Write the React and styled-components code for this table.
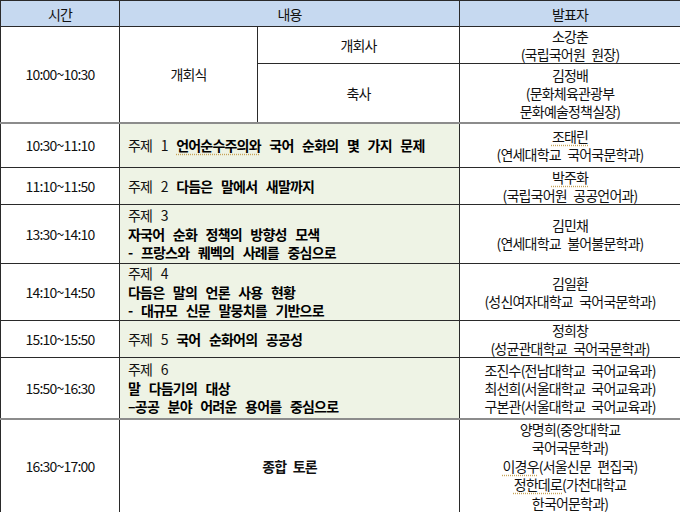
import React from 'react'
import styled, { createGlobalStyle } from 'styled-components'

const GlobalStyle = createGlobalStyle`
  html, body {
    margin: 0;
    padding: 0;
    background: #fff;
  }
  body {
    font-family: "Noto Sans CJK KR", "Noto Sans", sans-serif;
    color: #111;
  }
`

const Table = styled.table`
  width: 680px;
  height: 512px;
  border-collapse: collapse;
  table-layout: fixed;
  font-size: 14px;
  letter-spacing: -0.8px;
  border: 1px solid #2a2a2a;
`

const Row = styled.tr`
  height: ${p => p.$h}px;
  border-bottom: ${p => (p.$soft ? '2px solid #8c8c8c' : '1px solid #2a2a2a')};
`

const HeadCell = styled.th`
  background: #c6d9f0;
  font-weight: 400;
  text-align: center;
  padding: 0;
  line-height: 18px;
  border: 1px solid #2a2a2a;
`

const Cell = styled.td`
  padding: 0 ${p => (p.$left ? '8px' : '2px')};
  text-align: ${p => (p.$left ? 'left' : 'center')};
  vertical-align: middle;
  background: ${p => (p.$green ? '#eef3e5' : '#fff')};
  line-height: ${p => (p.$lh ? p.$lh : 18.5)}px;
  word-spacing: ${p => (p.$left ? 6.2 : 4)}px;
  font-weight: ${p => (p.$bold ? 700 : 400)};
  border-left: 1px solid #2a2a2a;
  border-right: 1px solid #2a2a2a;
  white-space: nowrap;
  overflow: hidden;
`

const Bold = styled.b`
  font-weight: 700;
  color: #000;
`

const Line = styled.div``

const Checked = styled.span`
  text-decoration: underline dotted #c6a45a;
  text-underline-offset: 3px;
`

const topics = [
  {
    time: '10:30~11:10',
    h: 45,
    topic: [<Line key='a'>주제 1 <Bold><Checked>언어순수주의와</Checked> 국어 순화의 몇 가지 문제</Bold></Line>],
    who: [<Line key='a'><Checked>조태린</Checked></Line>, <Line key='b'>(연세대학교 국어국문학과)</Line>]
  },
  {
    time: '11:10~11:50',
    h: 37,
    topic: [<Line key='a'>주제 2 <Bold>다듬은 말에서 새말까지</Bold></Line>],
    who: [<Line key='a'><Checked>박주화</Checked></Line>, <Line key='b'>(국립국어원 공공언어과)</Line>]
  },
  {
    time: '13:30~14:10',
    h: 59,
    topic: [
      <Line key='a'>주제 3</Line>,
      <Line key='b'><Bold>자국어 순화 정책의 방향성 모색</Bold></Line>,
      <Line key='c'><Bold>- 프랑스와 퀘벡의 사례를 중심으로</Bold></Line>
    ],
    who: [<Line key='a'>김민채</Line>, <Line key='b'>(연세대학교 불어불문학과)</Line>]
  },
  {
    time: '14:10~14:50',
    h: 57,
    topic: [
      <Line key='a'>주제 4</Line>,
      <Line key='b'><Bold>다듬은 말의 언론 사용 현황</Bold></Line>,
      <Line key='c'><Bold>- 대규모 신문 말뭉치를 기반으로</Bold></Line>
    ],
    who: [<Line key='a'>김일환</Line>, <Line key='b'>(성신여자대학교 국어국문학과)</Line>]
  },
  {
    time: '15:10~15:50',
    h: 36,
    topic: [<Line key='a'>주제 5 <Bold>국어 순화어의 공공성</Bold></Line>],
    who: [<Line key='a'>정희창</Line>, <Line key='b'>(성균관대학교 국어국문학과)</Line>]
  },
  {
    time: '15:50~16:30',
    h: 61,
    soft: true,
    topic: [
      <Line key='a'>주제 6</Line>,
      <Line key='b'><Bold>말 다듬기의 대상</Bold></Line>,
      <Line key='c'><Bold>–공공 분야 어려운 용어를 중심으로</Bold></Line>
    ],
    who: [
      <Line key='a'>조진수(전남대학교 국어교육과)</Line>,
      <Line key='b'>최선희(서울대학교 국어교육과)</Line>,
      <Line key='c'>구본관(서울대학교 국어교육과)</Line>
    ]
  }
]

const App = () => (
  <>
    <GlobalStyle />
    <Table>
      <colgroup>
        <col style={{ width: 119 }} />
        <col style={{ width: 138 }} />
        <col style={{ width: 202 }} />
        <col style={{ width: 221 }} />
      </colgroup>
      <thead>
        <Row $h={26}>
          <HeadCell>시간</HeadCell>
          <HeadCell colSpan={2}>내용</HeadCell>
          <HeadCell>발표자</HeadCell>
        </Row>
      </thead>
      <tbody>
        <Row $h={37}>
          <Cell rowSpan={2}>10:00~10:30</Cell>
          <Cell rowSpan={2}>개회식</Cell>
          <Cell>개회사</Cell>
          <Cell $lh={18}>
            <Line>소강춘</Line>
            <Line>(국립국어원 원장)</Line>
          </Cell>
        </Row>
        <Row $h={59} $soft>
          <Cell>축사</Cell>
          <Cell $lh={18}>
            <Line>김정배</Line>
            <Line>(문화체육관광부</Line>
            <Line>문화예술정책실장)</Line>
          </Cell>
        </Row>
        {topics.map(t => (
          <Row key={t.time} $h={t.h} $soft={t.soft}>
            <Cell>{t.time}</Cell>
            <Cell colSpan={2} $left $green>{t.topic}</Cell>
            <Cell $lh={18}>{t.who}</Cell>
          </Row>
        ))}
        <Row $h={94}>
          <Cell>16:30~17:00</Cell>
          <Cell colSpan={2} $bold>종합 토론</Cell>
          <Cell $lh={18.5}>
            <Line>양명희(중앙대학교</Line>
            <Line>국어국문학과)</Line>
            <Line><Checked>이경우</Checked>(서울신문 편집국)</Line>
            <Line><Checked>정한데로</Checked>(가천대학교</Line>
            <Line>한국어문학과)</Line>
          </Cell>
        </Row>
      </tbody>
    </Table>
  </>
)

export default App
